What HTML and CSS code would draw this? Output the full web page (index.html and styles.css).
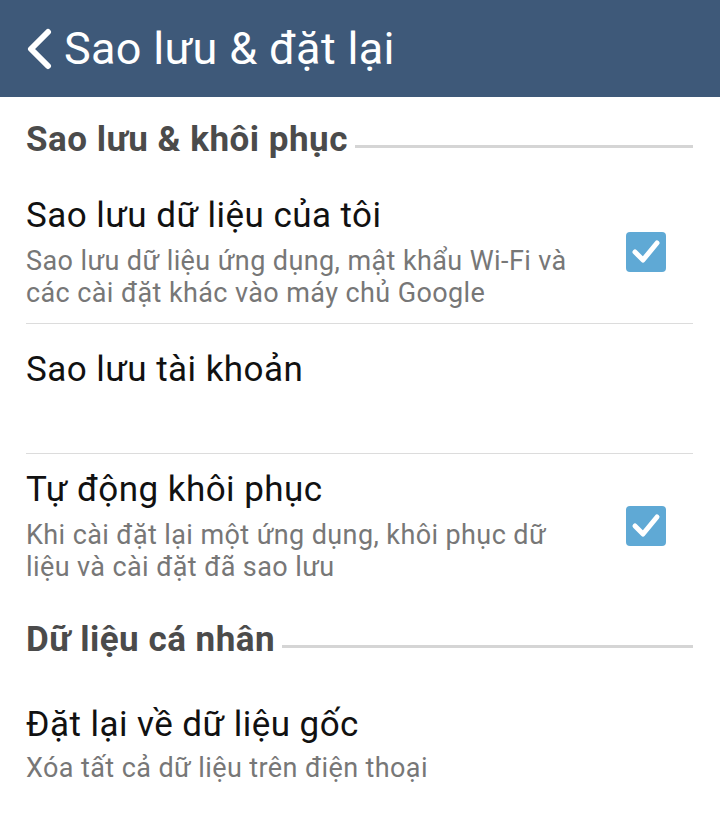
FILE: index.html
```html
<!DOCTYPE html>
<html lang="vi">
<head>
<meta charset="utf-8">
<title>Sao lưu &amp; đặt lại</title>
<link rel="stylesheet" href="styles.css">
</head>
<body>
<header class="appbar">
  <svg class="back" width="26" height="42" viewBox="0 0 26 42" aria-hidden="true">
    <polyline points="22,4 5,21 22,38" fill="none" stroke="#ffffff" stroke-width="6" stroke-linecap="round" stroke-linejoin="round"/>
  </svg>
  <h1 class="appbar-title">Sao lưu &amp; đặt lại</h1>
</header>
<main class="list">
  <div class="section section-first">
    <span class="section-title">Sao lưu &amp; khôi phục</span>
    <span class="section-line"></span>
  </div>
  <div class="item item-1">
    <div class="item-text">
      <div class="item-title">Sao lưu dữ liệu của tôi</div>
      <div class="item-summary">Sao lưu dữ liệu ứng dụng, mật khẩu Wi-Fi và các cài đặt khác vào máy chủ Google</div>
    </div>
    <span class="checkbox">
      <svg width="40" height="40" viewBox="0 0 40 40" aria-hidden="true">
        <polyline points="9,20 17,28 31,11" fill="none" stroke="#ffffff" stroke-width="5" stroke-linecap="round" stroke-linejoin="round"/>
      </svg>
    </span>
  </div>
  <div class="divider"></div>
  <div class="item item-2">
    <div class="item-text">
      <div class="item-title">Sao lưu tài khoản</div>
    </div>
  </div>
  <div class="divider"></div>
  <div class="item item-3">
    <div class="item-text">
      <div class="item-title">Tự động khôi phục</div>
      <div class="item-summary">Khi cài đặt lại một ứng dụng, khôi phục dữ liệu và cài đặt đã sao lưu</div>
    </div>
    <span class="checkbox">
      <svg width="40" height="40" viewBox="0 0 40 40" aria-hidden="true">
        <polyline points="9,20 17,28 31,11" fill="none" stroke="#ffffff" stroke-width="5" stroke-linecap="round" stroke-linejoin="round"/>
      </svg>
    </span>
  </div>
  <div class="section section-second">
    <span class="section-title">Dữ liệu cá nhân</span>
    <span class="section-line"></span>
  </div>
  <div class="item item-4">
    <div class="item-text">
      <div class="item-title">Đặt lại về dữ liệu gốc</div>
      <div class="item-summary">Xóa tất cả dữ liệu trên điện thoại</div>
    </div>
  </div>
</main>
</body>
</html>
```

FILE: styles.css
```css
html, body {
  margin: 0;
  padding: 0;
  background: #ffffff;
}

body {
  width: 720px;
  height: 832px;
  overflow: hidden;
  font-family: Roboto, "Noto Sans", "DejaVu Sans", sans-serif;
}

.appbar {
  height: 97px;
  background: #3e5979;
  display: flex;
  align-items: center;
  padding-left: 26px;
  box-sizing: border-box;
}

.back {
  display: block;
  flex: none;
}

.appbar-title {
  margin: 0 0 0 12px;
  font-size: 45px;
  font-weight: 400;
  letter-spacing: 0.3px;
  color: #ffffff;
  line-height: 52px;
  white-space: nowrap;
}

.list {
  padding: 0 27px 0 26px;
}

.section {
  display: flex;
  align-items: flex-end;
}

.section-first {
  padding-top: 23px;
}

.section-second {
  padding-top: 37px;
}

.section-title {
  font-size: 35px;
  font-weight: 700;
  letter-spacing: 0.5px;
  line-height: 40px;
  color: #4b4b4b;
  white-space: nowrap;
}

.section-line {
  flex: 1;
  height: 3px;
  margin: 0 0 12px 7px;
  background: #d5d5d5;
}

.item {
  display: flex;
  align-items: center;
}

.item-text {
  flex: 1;
  min-width: 0;
}

.item-title {
  font-size: 35px;
  letter-spacing: 0.45px;
  line-height: 42px;
  color: #111111;
}

.item-summary {
  margin-top: 8px;
  font-size: 27px;
  letter-spacing: 0.4px;
  line-height: 32px;
  color: #777777;
}

.item-1 {
  padding: 35px 0 14px;
}

.item-2 {
  padding: 25px 0 62px;
}

.item-3 {
  padding: 15px 0 0;
}

.item-4 {
  padding: 44px 0 0;
}

.item-4 .item-summary {
  margin-top: 6px;
}

.checkbox {
  flex: none;
  width: 40px;
  height: 40px;
  margin: 0 27px 0 36px;
  border-radius: 4px;
  background: #5fa9d5;
  display: flex;
}

.checkbox svg {
  display: block;
}

.divider {
  height: 1px;
  background: #dcdcdc;
}
```
